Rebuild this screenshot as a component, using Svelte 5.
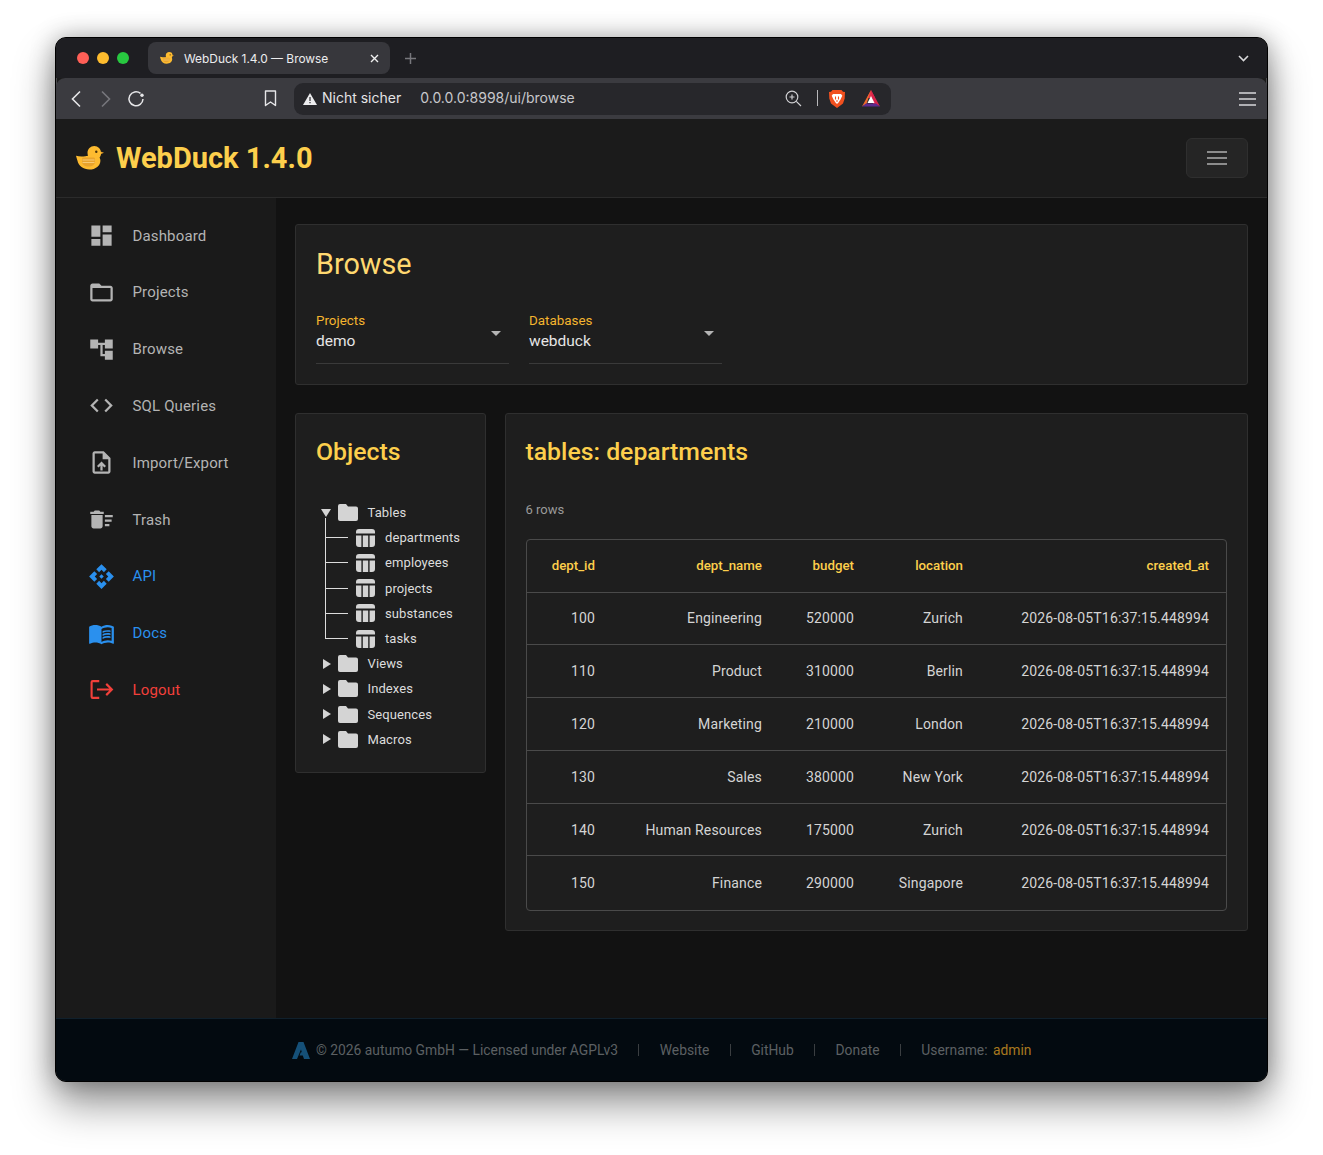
<script lang="ts">
  const nav = [
    { label: 'Dashboard', icon: 'M3 13h8V3H3v10zm0 8h8v-6H3v6zm10 0h8V11h-8v10zm0-18v6h8V3h-8z', tone: '' },
    { label: 'Projects', icon: 'M20 6h-8l-2-2H4c-1.1 0-1.99.9-1.99 2L2 18c0 1.1.9 2 2 2h16c1.1 0 2-.9 2-2V8c0-1.1-.9-2-2-2zm0 12H4V8h16v10z', tone: '' },
    { label: 'Browse', icon: 'M22 11V3h-7v3H9V3H2v8h7V8h2v10h4v3h7v-8h-7v3h-2V8h2v3z', tone: '' },
    { label: 'SQL Queries', icon: 'M9.4 16.6L4.8 12l4.6-4.6L8 6l-6 6 6 6 1.4-1.4zm5.2 0l4.6-4.6-4.6-4.6L16 6l6 6-6 6-1.4-1.4z', tone: '' },
    { label: 'Import/Export', icon: 'M14 2H6c-1.1 0-1.99.9-1.99 2L4 20c0 1.1.89 2 1.99 2H18c1.1 0 2-.9 2-2V8l-6-6zm4 18H6V4h7v5h5v11zM8 15.01l1.41 1.41L11 14.84V19h2v-4.16l1.59 1.59L16 15.01 12.01 11 8 15.01z', tone: '' },
    { label: 'Trash', icon: 'M15 16h4v2h-4zm0-8h7v2h-7zm0 4h6v2h-6zM3 18c0 1.1.9 2 2 2h6c1.1 0 2-.9 2-2V8H3v10zM14 5h-3l-1-1H6L5 5H2v2h12z', tone: '' },
    { label: 'API', icon: 'M14 12l-2 2-2-2 2-2 2 2zm-2-6l2.12 2.12 2.5-2.5L12 1 7.38 5.62l2.5 2.5L12 6zm-6 6l2.12-2.12-2.5-2.5L1 12l4.62 4.62 2.5-2.5L6 12zm12 0l-2.12 2.12 2.5 2.5L23 12l-4.62-4.62-2.5 2.5L18 12zm-6 6l-2.12-2.12-2.5 2.5L12 23l4.62-4.62-2.5-2.5L12 18z', tone: 'blue' },
    { label: 'Docs', icon: 'M21 5c-1.11-.35-2.33-.5-3.5-.5-1.95 0-4.05.4-5.5 1.5-1.45-1.1-3.55-1.5-5.5-1.5S2.45 4.9 1 6v14.65c0 .25.25.5.5.5.1 0 .15-.05.25-.05C3.1 20.45 5.05 20 6.5 20c1.95 0 4.05.4 5.5 1.5 1.35-.85 3.8-1.5 5.5-1.5 1.65 0 3.35.3 4.75 1.05.1.05.15.05.25.05.25 0 .5-.25.5-.5V6c-.6-.45-1.25-.75-2-1zm0 13.5c-1.1-.35-2.3-.5-3.5-.5-1.7 0-4.15.65-5.5 1.5V8c1.35-.85 3.8-1.5 5.5-1.5 1.2 0 2.4.15 3.5.5v11.5zM17.5 10.5c.88 0 1.73.09 2.5.26V9.24c-.79-.15-1.64-.24-2.5-.24-1.7 0-3.24.29-4.5.83v1.66c1.13-.64 2.7-.99 4.5-.99zM13 12.49v1.66c1.13-.64 2.7-.99 4.5-.99.88 0 1.73.09 2.5.26V11.9c-.79-.15-1.64-.24-2.5-.24-1.7 0-3.24.3-4.5.83zM17.5 14.33c-1.7 0-3.24.29-4.5.83v1.66c1.13-.64 2.7-.99 4.5-.99.88 0 1.73.09 2.5.26v-1.52c-.79-.16-1.64-.24-2.5-.24z', tone: 'blue' },
    { label: 'Logout', line: 'M10 4.500H4.200a1 1 0 0 0-1 1v13a1 1 0 0 0 1 1H10M8 12h13M16.200 7l5 5-5 5', tone: 'red' },
  ];

  const tables = ['departments', 'employees', 'projects', 'substances', 'tasks'];
  const groups = ['Views', 'Indexes', 'Sequences', 'Macros'];
  const stamp = '2026-08-05T16:37:15.448994';
  const rows = [
    [100, 'Engineering', 520000, 'Zurich'],
    [110, 'Product', 310000, 'Berlin'],
    [120, 'Marketing', 210000, 'London'],
    [130, 'Sales', 380000, 'New York'],
    [140, 'Human Resources', 175000, 'Zurich'],
    [150, 'Finance', 290000, 'Singapore'],
  ];
</script>

{#snippet duck(w: number, h: number)}
  <svg class="duck" width={w} height={h} viewBox="0 0 28 24" aria-hidden="true">
    <path d="M24.500 5.500L28 6.800l-3.600 1.400z" fill="#f0a52a"/>
    <path d="M18.300 0a6.800 6.800 0 0 1 6.800 6.800c0 2-.6 3.500-1.500 4.700.6 1.100.8 2.200.8 3.200 0 5-4.800 8.800-11 8.800C7.400 23.500 2.500 19.800 1.400 14.500.9 13 .5 11.500 0 9.700c2.600.9 6 .9 9.300.6 1 0 1.800-.2 2.700-.5-.3-.9-.5-1.900-.5-3C11.500 3 14.500 0 18.300 0z" fill="#fdbb30"/>
    <path d="M7.500 11.500h10c1 0 1.500.6 1.500 1.500v3c0 2.500-2.800 4.500-6.500 4.500S6 18.500 6 16v-3c0-.9.600-1.500 1.500-1.500z" fill="#e9a32c"/>
    <path d="M6.500 14h12M6.500 16.500h12" stroke="#f9cf7a" stroke-width=".9"/>
    <circle cx="20.300" cy="5.700" r="1.200" fill="#4a3208"/>
  </svg>
{/snippet}

{#snippet folder()}
  <svg class="folder" viewBox="0 0 20 17" aria-hidden="true">
    <path d="M2 0h6l2 2.500h8a2 2 0 0 1 2 2V15a2 2 0 0 1-2 2H2a2 2 0 0 1-2-2V2a2 2 0 0 1 2-2z" fill="#d4d4d4"/>
  </svg>
{/snippet}

{#snippet tableIcon()}
  <svg class="tbl" viewBox="0 0 19 18" aria-hidden="true">
    <path d="M3 0h13a3 3 0 0 1 3 3v1.500H0V3a3 3 0 0 1 3-3z" fill="#d4d4d4"/>
    <path d="M0 6.500h5.400V18H3a3 3 0 0 1-3-3zM6.800 6.500h5.400V18H6.800zM13.600 6.500H19V15a3 3 0 0 1-3 3h-2.400z" fill="#d4d4d4"/>
  </svg>
{/snippet}

<div class="stage">
  <div class="window">
    <div class="tabbar">
      <div class="lights">
        <span class="light red"></span>
        <span class="light amber"></span>
        <span class="light green"></span>
      </div>
      <div class="tab">
        {@render duck(14, 12)}
        <span class="tab-title">WebDuck 1.4.0 — Browse</span>
        <svg class="tab-x" width="9" height="9" viewBox="0 0 9 9" aria-hidden="true">
          <path d="M1 1l7 7M8 1L1 8" stroke="#f0f0f0" stroke-width="1.400"/>
        </svg>
      </div>
      <svg class="tab-plus" width="11" height="11" viewBox="0 0 11 11" aria-hidden="true">
        <path d="M5.500 0v11M0 5.500h11" stroke="#77777c" stroke-width="1.500"/>
      </svg>
      <svg class="tab-more" width="11" height="7" viewBox="0 0 11 7" aria-hidden="true">
        <path d="M1 1l4.500 4.500L10 1" fill="none" stroke="#d8d8da" stroke-width="1.600"/>
      </svg>
    </div>

    <div class="toolbar">
      <svg class="tool" width="12" height="18" viewBox="0 0 12 18" aria-hidden="true"><path d="M10 1.500L2.500 9l7.500 7.500" fill="none" stroke="#e6e6e8" stroke-width="1.600"/></svg>
      <svg class="tool fwd" width="12" height="18" viewBox="0 0 12 18" aria-hidden="true"><path d="M2 1.500L9.500 9 2 16.500" fill="none" stroke="#77777c" stroke-width="1.600"/></svg>
      <svg class="tool reload" width="18" height="18" viewBox="0 0 18 18" aria-hidden="true">
        <path d="M13.500 3.400A7 7 0 1 0 16 9" fill="none" stroke="#e6e6e8" stroke-width="1.500"/>
        <circle cx="15" cy="5.300" r="1.700" fill="#e6e6e8"/>
      </svg>
      <svg class="tool bookmark" width="13" height="17" viewBox="0 0 13 17" aria-hidden="true">
        <path d="M1.500 1h10v14.500l-5-3.500-5 3.500z" fill="none" stroke="#e6e6e8" stroke-width="1.400" stroke-linejoin="round"/>
      </svg>
      <div class="urlbar">
        <svg width="14" height="12" viewBox="0 0 14 12" aria-hidden="true">
          <path d="M7 0l7 12H0z" fill="#ececee"/>
          <path d="M6.400 4h1.200v4H6.400zM6.400 9h1.200v1.200H6.400z" fill="#28282c"/>
        </svg>
        <span class="insecure">Nicht sicher</span>
        <span class="url">0.0.0.0:8998/ui/browse</span>
        <svg class="zoom-ico" width="17" height="17" viewBox="0 0 17 17" aria-hidden="true">
          <circle cx="7" cy="7" r="5.800" fill="none" stroke="#cfcfd2" stroke-width="1.200"/>
          <path d="M7 4.500v5M4.500 7h5M11.300 11.300l4.700 4.700" stroke="#cfcfd2" stroke-width="1.200"/>
        </svg>
        <span class="url-sep"></span>
        <svg class="brave" width="16" height="18" viewBox="0 0 16 18" aria-hidden="true">
          <path d="M3.500 0h9l1.500 1.700L16 2l-.3 6.500L14 13.500 8 18l-6-4.500L.3 8.500 0 2l2-.3z" fill="#f1501f"/>
          <path d="M4 4h8l1.300 1.800-1.800 3.700-2 3L8 14l-1.500-1.500-2-3L2.700 5.800z" fill="#fff"/>
          <path d="M6.500 6.500v3M9.500 6.500v3M7 11h2" stroke="#f1501f" stroke-width="1.100"/>
        </svg>
        <svg class="bat" width="18" height="17" viewBox="0 0 18 17" aria-hidden="true">
          <path d="M9 0l4 8H5z" fill="#e2334e"/>
          <path d="M9 0l9 16.500-4.500-2.500H11z" fill="#d8234a"/>
          <path d="M9 0L0 16.500 4.500 14z" fill="#ee6a2c"/>
          <path d="M0 16.500h18l-4-3H4z" fill="#5a2a8e"/>
          <path d="M9 6l3.500 7h-7z" fill="#fff"/>
        </svg>
      </div>
      <svg class="tool burger" width="17" height="14" viewBox="0 0 17 14" aria-hidden="true">
        <path d="M0 1h17M0 7h17M0 13h17" stroke="#d8d8da" stroke-width="1.500"/>
      </svg>
    </div>

    <header class="appbar">
      <div class="brand">
        {@render duck(28, 24)}
        <span>WebDuck 1.4.0</span>
      </div>
      <button class="menu-btn" aria-label="Menu">
        <svg width="20" height="14" viewBox="0 0 20 14" aria-hidden="true">
          <path d="M0 1h20M0 7h20M0 13h20" stroke="#8c8c8c" stroke-width="2"/>
        </svg>
      </button>
    </header>

    <div class="body">
      <nav class="sidebar">
        {#each nav as item}
          <div class="nav-item {item.tone}">
            <svg width="27" height="27" viewBox="0 0 24 24" aria-hidden="true">
              {#if item.line}
                <path d={item.line} fill="none" stroke="currentColor" stroke-width="1.900"/>
              {:else}
                <path d={item.icon} fill="currentColor"/>
              {/if}
            </svg>
            <span>{item.label}</span>
          </div>
        {/each}
      </nav>

      <main class="main">
        <section class="panel browse">
          <h1>Browse</h1>
          <div class="selects">
            <div class="select">
              <label>Projects</label>
              <div class="value">demo</div>
              <span class="caret"></span>
            </div>
            <div class="select">
              <label>Databases</label>
              <div class="value">webduck</div>
              <span class="caret"></span>
            </div>
          </div>
        </section>

        <div class="columns">
          <section class="panel objects">
            <h2>Objects</h2>
            <div class="tree">
              <div class="tree-row">
                <span class="arrow down"></span>
                {@render folder()}
                <span class="tree-label">Tables</span>
              </div>
              <div class="children">
                {#each tables as t}
                  <div class="tree-row leaf">
                    <span class="branch"></span>
                    {@render tableIcon()}
                    <span class="leaf-label">{t}</span>
                  </div>
                {/each}
              </div>
              {#each groups as g}
                <div class="tree-row">
                  <span class="arrow"></span>
                  {@render folder()}
                  <span class="tree-label">{g}</span>
                </div>
              {/each}
            </div>
          </section>

          <section class="panel result">
            <h2>tables: departments</h2>
            <div class="count">6 rows</div>
            <div class="table-wrap">
              <table>
                <thead>
                  <tr>
                    <th class="c1">dept_id</th>
                    <th class="c2">dept_name</th>
                    <th class="c3">budget</th>
                    <th class="c4">location</th>
                    <th>created_at</th>
                  </tr>
                </thead>
                <tbody>
                  {#each rows as r}
                    <tr>
                      {#each r as v}<td>{v}</td>{/each}
                      <td>{stamp}</td>
                    </tr>
                  {/each}
                </tbody>
              </table>
            </div>
          </section>
        </div>
      </main>
    </div>

    <footer class="footer">
      <svg width="18" height="17" viewBox="0 0 18 17" aria-hidden="true">
        <path d="M6.500 0h5L18 17h-6l-1.200-3.500H7.500l1.300-3.300h1L9 7.500 5 17H0z" fill="#155078"/>
      </svg>
      <span class="copy">© 2026 autumo GmbH — Licensed under AGPLv3</span>
      <span class="pipe"></span>
      <span>Website</span>
      <span class="pipe"></span>
      <span>GitHub</span>
      <span class="pipe"></span>
      <span>Donate</span>
      <span class="pipe"></span>
      <span>Username: <em>admin</em></span>
    </footer>
  </div>
</div>

<style>
  :global(body) {
    margin: 0;
    background: #fff;
  }
  .stage {
    height: 1155px;
    box-sizing: border-box;
    padding: 37px 55px 73px;
    font-family: Roboto, "Liberation Sans", sans-serif;
  }
  .window {
    width: 1213px;
    height: 1045px;
    box-sizing: border-box;
    display: flex;
    flex-direction: column;
    background: #1b1b1b;
    border-radius: 11px;
    border: 1px solid #000;
    box-shadow: inset 0 0 0 1px #4a4a4c, 0 22px 40px rgba(0,0,0,0.42), 0 0 24px rgba(0,0,0,0.3);
    overflow: hidden;
  }

  /* browser chrome */
  .tabbar {
    height: 40px;
    flex-shrink: 0;
    display: flex;
    align-items: center;
    background: #1e1e22;
    padding: 0 18px 0 21px;
  }
  .lights { display: flex; gap: 8px; margin-right: 19px; }
  .light { width: 12px; height: 12px; border-radius: 50%; }
  .light.red { background: #ff5f57; }
  .light.amber { background: #febc2e; }
  .light.green { background: #28c840; }
  .tab {
    width: 242px;
    height: 32px;
    box-sizing: border-box;
    display: flex;
    align-items: center;
    padding: 0 11px 0 12px;
    background: #37373c;
    border-radius: 8px;
    font-family: Inter, sans-serif;
    font-size: 11.900px;
    color: #ececee;
  }
  .tab-title { margin-left: 10px; flex: 1; white-space: nowrap; }
  .tab-plus { margin-left: 15px; }
  .tab-more { margin-left: auto; }
  .toolbar {
    height: 41px;
    flex-shrink: 0;
    display: flex;
    align-items: center;
    background: #3b3b40;
    border-radius: 9px 9px 0 0;
    font-family: Inter, sans-serif;
    padding-right: 11px;
  }
  .tool { flex-shrink: 0; }
  .toolbar > .tool:first-child { margin-left: 14px; }
  .fwd { margin-left: 18px; }
  .reload { margin-left: 15px; }
  .bookmark { margin-left: 119px; }
  .urlbar {
    width: 597px;
    height: 32px;
    box-sizing: border-box;
    margin-left: 17px;
    display: flex;
    align-items: center;
    background: #27272b;
    border-radius: 9px;
    padding-left: 9px;
    font-size: 14px;
    color: #e4e4e6;
  }
  .urlbar span { position: relative; top: -1px; }
  .insecure { margin-left: 5px; }
  .url { margin-left: 19px; color: #c8c8cb; }
  .zoom-ico { margin-left: auto; }
  .url-sep { width: 1px; height: 16px; background: #b8b8bb; margin: 0 11px 0 15px; }
  .bat { margin: 0 11px 0 17px; }
  .burger { margin-left: auto; }

  /* app header */
  .appbar {
    height: 79px;
    flex-shrink: 0;
    box-sizing: border-box;
    display: flex;
    align-items: center;
    justify-content: space-between;
    padding: 0 19px 0 20px;
    background: #1b1b1b;
    border-bottom: 1px solid #2b2b2b;
  }
  .brand {
    display: flex;
    align-items: center;
    gap: 12px;
    font-size: 29px;
    font-weight: 700;
    color: #fdcf4c;
  }
  .menu-btn {
    width: 62px;
    height: 40px;
    display: flex;
    align-items: center;
    justify-content: center;
    padding: 0;
    background: #252525;
    border: 1px solid #2f2f2f;
    border-radius: 6px;
  }

  /* layout */
  .body { flex: 1; min-height: 0; display: flex; }
  .sidebar {
    width: 220px;
    flex-shrink: 0;
    box-sizing: border-box;
    padding-top: 9.200px;
    background: #1a1a1a;
  }
  .nav-item {
    height: 56.800px;
    display: flex;
    align-items: center;
    padding-left: 32px;
    gap: 17.500px;
    font-size: 15px;
    letter-spacing: 0.15px;
    color: #b4b4b4;
  }
  .nav-item svg { flex-shrink: 0; }
  .nav-item.blue { color: #2a90ee; }
  .nav-item.red { color: #f2403a; }
  .main {
    flex: 1;
    min-width: 0;
    background: #121212;
    padding: 26px 19px 0;
  }
  .panel {
    box-sizing: border-box;
    background: #1e1e1e;
    border: 1px solid #2f2f2f;
    border-radius: 3px;
  }
  .browse { height: 161px; padding: 20px; }
  h1 {
    margin: 0;
    font-size: 28.800px;
    font-weight: 400;
    line-height: 38px;
    color: #ffd870;
  }
  .selects { display: flex; gap: 20px; margin-top: 30px; }
  .select {
    position: relative;
    width: 193px;
    height: 51px;
    box-sizing: border-box;
    border-bottom: 1px solid #3a3a3a;
  }
  .select label {
    display: block;
    font-size: 13.400px;
    line-height: 16px;
    color: #f5b52e;
  }
  .value { font-size: 15.500px; line-height: 25px; color: #e6e6e6; }
  .caret {
    position: absolute;
    right: 8px;
    top: 18px;
    border-left: 5px solid transparent;
    border-right: 5px solid transparent;
    border-top: 5px solid #b4b4b4;
  }
  .columns { display: flex; align-items: flex-start; gap: 19px; margin-top: 28px; }
  h2 {
    margin: 0;
    font-size: 24.800px;
    font-weight: 500;
    line-height: 33px;
    color: #fdcf4c;
  }
  .objects { width: 191px; height: 360px; flex-shrink: 0; padding: 21px 20px 0; }
  .tree { margin-top: 32px; font-size: 13px; letter-spacing: 0.1px; color: #dcdcdc; }
  .tree-row { height: 25.200px; display: flex; align-items: center; }
  .arrow {
    width: 0;
    height: 0;
    margin-left: 7px;
    border-left: 8px solid #d4d4d4;
    border-top: 5px solid transparent;
    border-bottom: 5px solid transparent;
  }
  .arrow.down {
    margin-left: 5px;
    border-top: 8px solid #d4d4d4;
    border-left: 5px solid transparent;
    border-right: 5px solid transparent;
    border-bottom: 0;
  }
  .folder { width: 20px; height: 17px; margin-left: 6.500px; flex-shrink: 0; }
  .tree-label { margin-left: 10px; }
  .children { position: relative; }
  .children::before {
    content: '';
    position: absolute;
    left: 9px;
    top: -7px;
    bottom: 12px;
    width: 1px;
    background: #dcdcdc;
  }
  .branch { width: 22px; height: 1px; margin-left: 10px; background: #dcdcdc; flex-shrink: 0; }
  .tbl { width: 19px; height: 18px; margin-left: 7.500px; flex-shrink: 0; }
  .leaf-label { margin-left: 10.500px; }
  .result { flex: 1; min-width: 0; height: 518px; padding: 21px 20px 20px 19.500px; }
  .count { margin-top: 34px; font-size: 13px; line-height: 16px; color: #9a9a9a; }
  .table-wrap {
    margin-top: 21px;
    margin-left: 0.500px;
    height: 372px;
    box-sizing: border-box;
    border: 1px solid #4a4a4a;
    border-radius: 4px;
    overflow: hidden;
  }
  table { width: 100%; border-collapse: collapse; table-layout: fixed; }
  th, td {
    box-sizing: border-box;
    padding: 0 18px 0 0;
    text-align: right;
    white-space: nowrap;
    font-size: 14px;
    letter-spacing: 0.15px;
  }
  th:last-child, td:last-child { padding-right: 17px; }
  th { height: 52px; font-size: 13.300px; letter-spacing: 0; font-weight: 500; color: #fdcf4c; }
  td { height: 52.800px; color: #d4d4d4; border-top: 1px solid #4a4a4a; }
  .c1 { width: 86px; }
  .c2 { width: 167px; }
  .c3 { width: 92px; }
  .c4 { width: 109px; }

  /* footer */
  .footer {
    height: 63px;
    flex-shrink: 0;
    box-sizing: border-box;
    display: flex;
    align-items: center;
    justify-content: center;
    gap: 20.400px;
    background: #030a10;
    border-top: 1px solid #10202c;
    font-size: 13.850px;
    color: #5c6063;
  }
  .copy { margin-left: -14px; }
  .pipe { width: 1px; height: 12px; background: #3a3e41; }
  .footer em { font-style: normal; color: #a8781f; margin-left: 2px; }
</style>
